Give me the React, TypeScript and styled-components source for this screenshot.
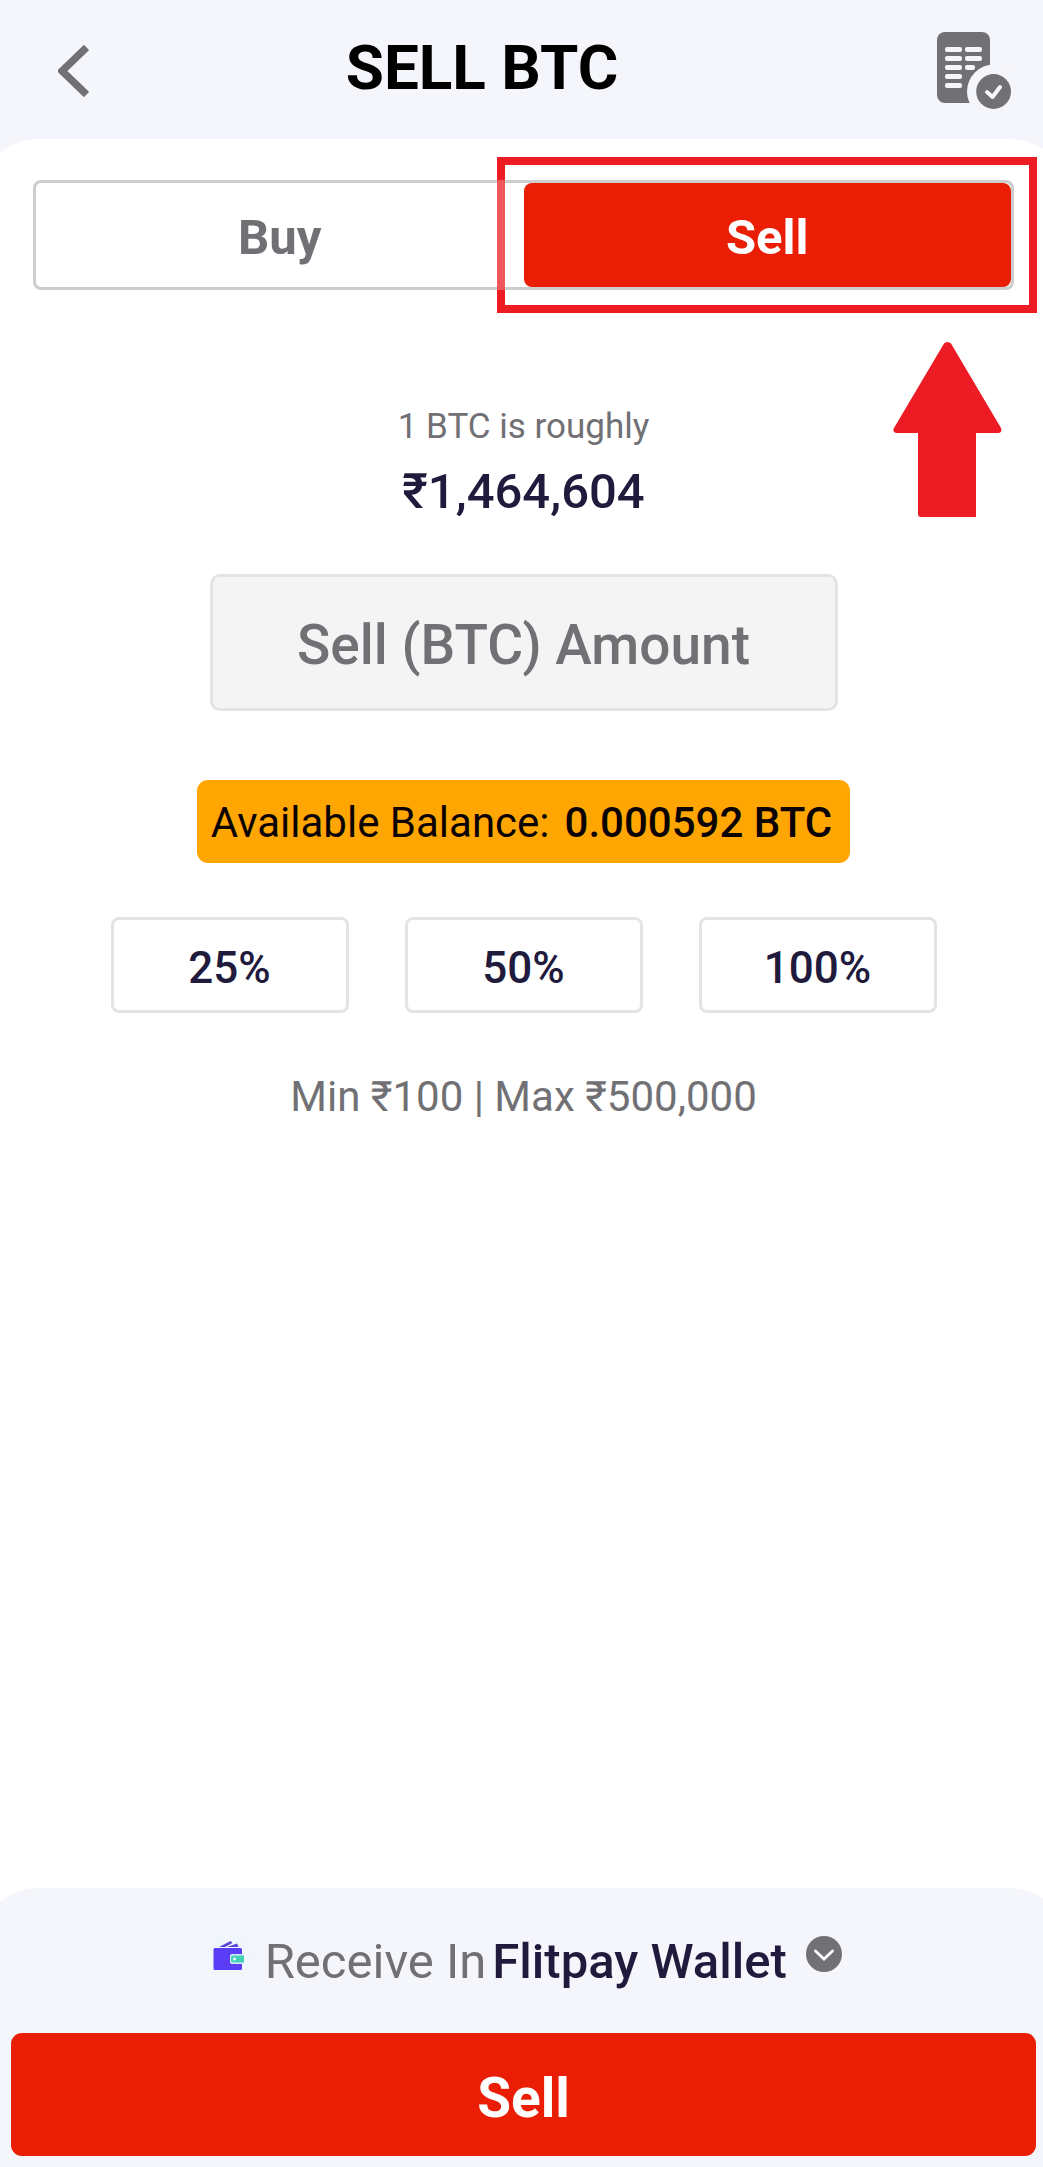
import React, { useState } from "react";
import styled, { createGlobalStyle } from "styled-components";

const color = {
  surface: "#f5f6fb",
  white: "#ffffff",
  grey: "#717074",
  navy: "#201a3d",
  red: "#e91e05",
  marker: "#ed1c24",
  line: "#e4e4e4",
};

const GlobalStyle = createGlobalStyle`
  *, *::before, *::after { box-sizing: border-box; }
  body {
    margin: 0;
    background: ${color.surface};
    font-family: Roboto, "Noto Sans", sans-serif;
    color: ${color.navy};
  }
  button, input, select { font-family: inherit; margin: 0; }
`;

const Page = styled.div`
  display: flex;
  flex-direction: column;
  min-height: 100vh;
  overflow: hidden;
`;

const Header = styled.header`
  display: flex;
  align-items: center;
  height: 139px;
  padding: 2px 32px 0 58px;
`;

const IconButton = styled.button<{ $width: number }>`
  display: flex;
  justify-content: flex-end;
  flex: none;
  width: ${(p) => p.$width}px;
  padding: 0;
  border: 0;
  background: none;
  color: ${color.grey};
  cursor: pointer;
`;

const Title = styled.h1`
  flex: 1;
  margin: 0;
  padding-bottom: 5px;
  text-align: center;
  font-size: 62px;
  line-height: 72px;
  font-weight: 700;
  color: #000;
`;

/* Both sheets run past the screen edges, so only part of each corner curve shows. */
const Sheet = styled.main`
  flex: 1;
  display: flex;
  flex-direction: column;
  align-items: center;
  margin: 0 -24px 0 -19px;
  padding: 41px 53px 40px 52px;
  border-radius: 56px 56px 0 0;
  background: ${color.white};
`;

const FooterBackdrop = styled.div`
  background: ${color.white};
`;

const Footer = styled.footer`
  display: flex;
  flex-direction: column;
  align-items: center;
  gap: 39px;
  margin: 0 -24px 0 -19px;
  padding: 42px 31px 11px 30px;
  border-radius: 56px 56px 0 0;
  background: ${color.surface};
`;

const Tabs = styled.div`
  position: relative;
  display: flex;
  align-self: stretch;
  height: 110px;
  border: 3px solid #cdcdcd;
  border-radius: 8px;
`;

const Tab = styled.button<{ $active: boolean }>`
  flex: 1;
  padding: 5px 0 0;
  border: 0;
  border-radius: 8px;
  background: ${(p) => (p.$active ? color.red : "transparent")};
  color: ${(p) => (p.$active ? color.white : color.grey)};
  font-size: 49px;
  font-weight: 700;
  cursor: pointer;
`;

const Marker = styled.div`
  position: absolute;
  top: -26px;
  right: -26px;
  left: calc(50% - 27px);
  height: 156px;
  border: 8px solid ${color.marker};
  pointer-events: none;

  &::before {
    content: "";
    position: absolute;
    top: 15px;
    left: -8px;
    width: 8px;
    height: 110px;
    background: #f0575d;
  }
`;

const MarkerArrow = styled.svg`
  position: absolute;
  top: 159px;
  right: 9px;
  pointer-events: none;
`;

const Rate = styled.section`
  display: flex;
  flex-direction: column;
  align-items: center;
  gap: 9px;
  margin: 113px 0 50px;
`;

const RateLabel = styled.span`
  font-size: 35px;
  line-height: 48px;
  color: ${color.grey};
`;

const RateValue = styled.strong`
  font-size: 49px;
  line-height: 64px;
  font-weight: 500;
`;

const AmountInput = styled.input`
  width: 628px;
  max-width: 100%;
  height: 137px;
  padding: 5px 16px 0;
  border: 3px solid ${color.line};
  border-radius: 10px;
  background: #f4f4f4;
  text-align: center;
  font-size: 55px;
  font-weight: 500;
  color: ${color.navy};

  &::placeholder {
    color: ${color.grey};
    opacity: 1;
  }
`;

const Balance = styled.p`
  display: flex;
  align-items: center;
  gap: 15px;
  height: 83px;
  margin: 69px 0 54px;
  padding: 2px 18px 0 14px;
  border-radius: 11px;
  background: #ffa602;
  font-size: 42px;
  color: #0b0303;
  white-space: nowrap;

  strong { font-weight: 500; }
`;

const Shares = styled.div`
  display: grid;
  grid-template-columns: repeat(3, 238px);
  gap: 56px;
`;

const Share = styled.button`
  height: 96px;
  padding: 5px 0 0;
  border: 3px solid ${color.line};
  border-radius: 8px;
  background: ${color.white};
  color: ${color.navy};
  font-size: 44px;
  font-weight: 500;
  cursor: pointer;
`;

const Limits = styled.p`
  margin: 56px 0 0;
  font-size: 42px;
  line-height: 56px;
  color: ${color.grey};
`;

const Receive = styled.div`
  display: flex;
  align-items: center;
  height: 64px;
  font-size: 49px;
  line-height: 64px;
`;

const ReceiveLabel = styled.label`
  margin: 0 6px 0 8px;
  color: ${color.grey};
`;

const WalletSelect = styled.select`
  appearance: none;
  height: 64px;
  padding: 0;
  border: 0;
  background: none;
  color: ${color.navy};
  font-size: 49px;
  line-height: 64px;
  font-weight: 500;
  cursor: pointer;
`;

const ChevronBadge = styled.svg`
  margin: 0 0 16px 19px;
  pointer-events: none;
`;

const WalletArt = styled.svg`
  margin-bottom: 12px;
`;

const SubmitButton = styled.button`
  align-self: stretch;
  height: 123px;
  padding: 6px 0 0;
  border: 0;
  border-radius: 11px;
  background: ${color.red};
  color: ${color.white};
  font-size: 55px;
  font-weight: 700;
  cursor: pointer;
`;

const BackIcon = () => (
  <svg width="31" height="52" viewBox="0 0 31 52" aria-hidden="true">
    <path d="M28.5 2.5 4 26l24.5 23.5" fill="none" stroke="currentColor" strokeWidth="7.5" />
  </svg>
);

const OrdersIcon = () => (
  <svg width="74" height="78" viewBox="0 0 74 78" aria-hidden="true">
    <rect width="53" height="71" rx="8" fill="currentColor" />
    <g fill={color.surface}>
      <circle cx="57" cy="59.5" r="27" />
      <rect x="8" y="15" width="17" height="5" rx="2" />
      <rect x="28" y="15" width="17" height="5" rx="2" />
      <rect x="8" y="24" width="17" height="5" rx="2" />
      <rect x="28" y="24" width="17" height="5" rx="2" />
      <rect x="8" y="33" width="17" height="5" rx="2" />
      <rect x="28" y="33" width="10" height="5" rx="2" />
      <rect x="8" y="42" width="17" height="5" rx="2" />
      <rect x="8" y="51" width="17" height="5" rx="2" />
    </g>
    <circle cx="56.6" cy="59.5" r="17.4" fill="currentColor" />
    <path
      d="m50 60 5.5 5L63 55"
      fill="none"
      stroke={color.surface}
      strokeWidth="4"
      strokeLinecap="round"
      strokeLinejoin="round"
    />
  </svg>
);

const WalletIcon = () => (
  <WalletArt width="52" height="52" viewBox="0 0 52 52" aria-hidden="true">
    <circle cx="26" cy="26" r="25" fill="#f1f6fd" />
    <path d="M14 17 25.5 11l2 2-7.5 4zM22 17l10-3.5 1.500 3.5z" fill="#5a45d8" />
    <rect x="8.5" y="18" width="28.5" height="22" rx="1.5" fill="#5b3df5" />
    <path d="M27 24h11.5v10H27a2 2 0 0 1-2-2v-6a2 2 0 0 1 2-2z" fill="#d5e6fb" />
    <path d="M28 25.5h11v7H28a2 2 0 0 1-2-2v-3a2 2 0 0 1 2-2z" fill="#44d0b9" />
    <circle cx="29.5" cy="29" r="1.5" fill="#e8fbf8" />
  </WalletArt>
);

const SHARES = [25, 50, 100];

export default function App() {
  const [side, setSide] = useState<"Buy" | "Sell">("Sell");
  const [amount, setAmount] = useState("");

  return (
    <Page>
      <GlobalStyle />
      <Header>
        <IconButton type="button" $width={31} aria-label="Back">
          <BackIcon />
        </IconButton>
        <Title>SELL BTC</Title>
        <IconButton type="button" $width={136} aria-label="Orders">
          <OrdersIcon />
        </IconButton>
      </Header>

      <Sheet>
        <Tabs>
          {(["Buy", "Sell"] as const).map((name) => (
            <Tab key={name} type="button" $active={side === name} onClick={() => setSide(name)}>
              {name}
            </Tab>
          ))}
          <Marker />
          <MarkerArrow width="109" height="175" viewBox="0 0 109 175" aria-hidden="true">
            <path
              d="M51 1.5q3.5-3 7 0L108 86q1.5 4-2 5H83v84H27q-2-.5-2-3V91H3q-4-1-2-5z"
              fill={color.marker}
            />
          </MarkerArrow>
        </Tabs>

        <Rate>
          <RateLabel>1 BTC is roughly</RateLabel>
          <RateValue>₹1,464,604</RateValue>
        </Rate>

        <AmountInput
          aria-label="Sell (BTC) Amount"
          placeholder="Sell (BTC) Amount"
          inputMode="decimal"
          value={amount}
          onChange={(e) => setAmount(e.target.value)}
        />

        <Balance>
          <span>Available Balance:</span>
          <strong>0.000592 BTC</strong>
        </Balance>

        <Shares>
          {SHARES.map((share) => (
            <Share
              key={share}
              type="button"
              onClick={() => setAmount(((0.000592 * share) / 100).toFixed(6))}
            >
              {share}%
            </Share>
          ))}
        </Shares>

        <Limits>Min ₹100 | Max ₹500,000</Limits>
      </Sheet>

      <FooterBackdrop>
        <Footer>
          <Receive>
            <WalletIcon />
            <ReceiveLabel htmlFor="wallet">Receive In</ReceiveLabel>
            <WalletSelect id="wallet">
              <option>Flitpay Wallet</option>
            </WalletSelect>
            <ChevronBadge width="36" height="36" viewBox="0 0 36 36" aria-hidden="true">
              <circle cx="18" cy="18" r="18" fill={color.grey} />
              <path
                d="m9.5 15 8.5 8 8.5-8"
                fill="none"
                stroke="#fff"
                strokeWidth="2.8"
                strokeLinecap="round"
              />
            </ChevronBadge>
          </Receive>
          <SubmitButton type="button">Sell</SubmitButton>
        </Footer>
      </FooterBackdrop>
    </Page>
  );
}
